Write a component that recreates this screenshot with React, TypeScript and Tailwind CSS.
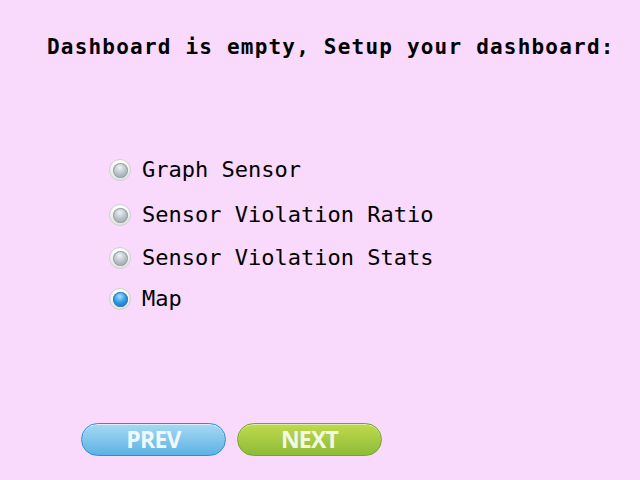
const options = [
  { label: 'Graph Sensor', checked: false, gap: 'mt-0' },
  { label: 'Sensor Violation Ratio', checked: false, gap: 'mt-[17px]' },
  { label: 'Sensor Violation Stats', checked: false, gap: 'mt-[15px]' },
  { label: 'Map', checked: true, gap: 'mt-[13px]' },
]

function Radio({ checked }: { checked: boolean }) {
  return (
    <span className="flex h-[22px] w-[22px] items-center justify-center rounded-full border border-[#cfcfcf] bg-gradient-to-b from-[#ffffff] to-[#e2e2e2]">
      <span
        className={
          checked
            ? 'h-[15px] w-[15px] rounded-full bg-[radial-gradient(circle_at_45%_30%,#a6e0ff_0%,#2f9be6_45%,#0b5fb0_100%)] shadow-[inset_0_0_0_1px_#3a7fbf]'
            : 'h-[15px] w-[15px] rounded-full bg-[radial-gradient(circle_at_45%_30%,#eef2f4_0%,#b6c0c6_50%,#8b969d_100%)] shadow-[inset_0_0_0_1px_#9aa5ab]'
        }
      />
    </span>
  )
}

export default function App() {
  return (
    <div className="h-[480px] w-[640px] overflow-hidden bg-[#f9dafd] font-['DejaVu_Sans_Mono',monospace] text-black">
      <h1 className="pl-[47px] pt-[34px] text-[21px] font-bold leading-[26px] tracking-[1.2px]">
        Dashboard is empty, Setup your dashboard:
      </h1>

      <ul className="mt-[96px] pl-[109px]">
        {options.map((o) => (
          <li key={o.label} className={`flex items-center gap-[11px] ${o.gap}`}>
            <Radio checked={o.checked} />
            <span className="text-[22px] leading-[28px]">{o.label}</span>
          </li>
        ))}
      </ul>

      <div className="mt-[110px] flex gap-[11px] pl-[81px] font-['Open_Sans',sans-serif]">
        <button className="flex h-[33px] w-[145px] items-center justify-center rounded-full border border-[#2d8fcf] bg-gradient-to-b from-[#a6d9f4] to-[#5bb2e3] pb-[1px] text-[23px] font-bold tracking-[-0.8px] text-[#f1f8fc] shadow-[inset_0_1px_0_rgba(255,255,255,0.6)]">
          PREV
        </button>
        <button className="flex h-[33px] w-[145px] items-center justify-center rounded-full border border-[#74a32e] bg-gradient-to-b from-[#c0da4c] to-[#8ebb38] pb-[1px] text-[23px] font-bold tracking-[-0.8px] text-[#f3f8e6] shadow-[inset_0_1px_0_rgba(255,255,255,0.5)]">
          NEXT
        </button>
      </div>
    </div>
  )
}
